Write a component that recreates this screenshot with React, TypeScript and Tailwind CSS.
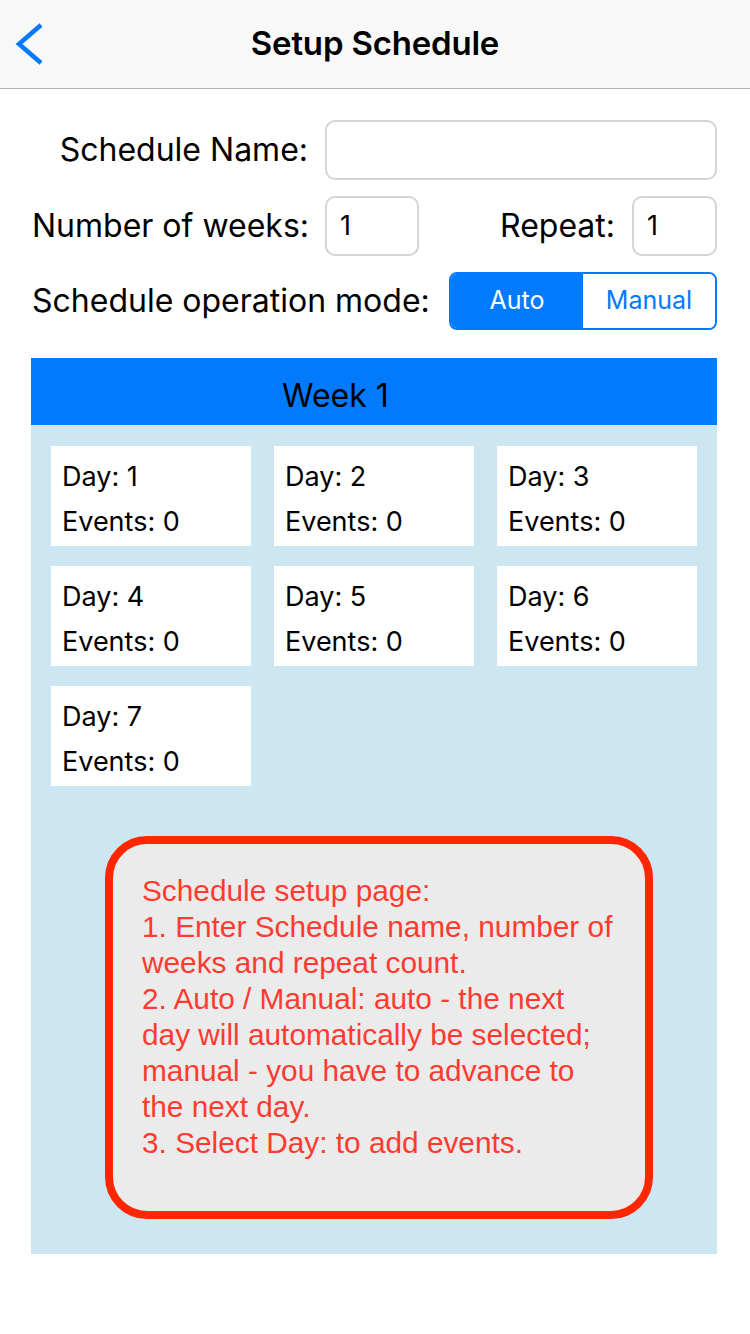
import React from "react";

const days = [1, 2, 3, 4, 5, 6, 7];

export default function App() {
  return (
    <div className="w-[750px] min-h-[1334px] bg-white font-['Inter','Liberation_Sans',sans-serif] text-black">
      {/* Nav bar */}
      <div className="h-[89px] bg-[#f8f8f8] border-b border-[#b2b2b2] grid grid-cols-[1fr_auto_1fr] items-center">
        <div className="pl-[12px] flex items-center">
          <svg width="34" height="44" viewBox="0 0 34 44">
            <path d="M29 3 L7 22 L29 41" fill="none" stroke="#007aff" strokeWidth="4.5" strokeLinecap="butt" strokeLinejoin="miter" />
          </svg>
        </div>
        <div className="text-[33px] font-semibold tracking-[-0.2px]">Setup Schedule</div>
        <div />
      </div>

      {/* Form */}
      <div className="pl-[32px] pr-[33px] pt-[31px] flex flex-col">
        <div className="flex items-center h-[60px]">
          <div className="w-[276px] text-right text-[32px]">Schedule Name:</div>
          <div className="ml-[17px] flex-1 h-[60px] rounded-[10px] border-2 border-[#d4d4d4] bg-white" />
        </div>
        <div className="flex items-center h-[60px] mt-[16px]">
          <div className="w-[276px] text-[32px] whitespace-nowrap">Number of weeks:</div>
          <div className="ml-[17px] w-[94px] h-[60px] rounded-[10px] border-2 border-[#d4d4d4] flex items-center pl-[13px] text-[27px]">1</div>
          <div className="flex-1 text-right text-[32px]">Repeat:</div>
          <div className="ml-[17px] w-[85px] h-[60px] rounded-[10px] border-2 border-[#d4d4d4] flex items-center pl-[13px] text-[27px]">1</div>
        </div>
        <div className="flex items-center h-[58px] mt-[16px]">
          <div className="flex-1 text-[32px] whitespace-nowrap">Schedule operation mode:</div>
          <div className="w-[268px] h-[58px] rounded-[8px] border-2 border-[#007aff] flex overflow-hidden">
            <div className="w-[132px] bg-[#007aff] text-white flex items-center justify-center text-[25px]">Auto</div>
            <div className="flex-1 bg-white text-[#007aff] flex items-center justify-center text-[25px]">Manual</div>
          </div>
        </div>
      </div>

      {/* Week panel */}
      <div className="ml-[31px] w-[686px] mt-[28px] bg-[#cce7f2] pb-[35px]">
        <div className="h-[67px] bg-[#007aff] flex items-center pl-[251px] pt-[8px] text-[32px]">Week 1</div>
        <div className="grid grid-cols-[200px_200px_200px] gap-x-[23px] gap-y-[20px] pl-[20px] pt-[21px]">
          {days.map((d) => (
            <div key={d} className="h-[100px] bg-white pl-[11px] pt-[6px] flex flex-col justify-center gap-[13px] text-[27px] leading-[32px]">
              <div>Day: {d}</div>
              <div>Events: 0</div>
            </div>
          ))}
        </div>
        <div className="mt-[50px] ml-[74px] w-[548px] h-[383px] rounded-[42px] border-[8px] border-[#ff2600] bg-[#ebebeb] pl-[29px] pr-[10px] pt-[29px] font-['Liberation_Sans',Arial,sans-serif] text-[#ff3b30] text-[29.8px] leading-[36px] whitespace-nowrap">
          <div>Schedule setup page:</div>
          <div>1. Enter Schedule name, number of</div>
          <div>weeks and repeat count.</div>
          <div>2. Auto / Manual: auto - the next</div>
          <div>day will automatically be selected;</div>
          <div>manual - you have to advance to</div>
          <div>the next day.</div>
          <div>3. Select Day: to add events.</div>
        </div>
      </div>
    </div>
  );
}
